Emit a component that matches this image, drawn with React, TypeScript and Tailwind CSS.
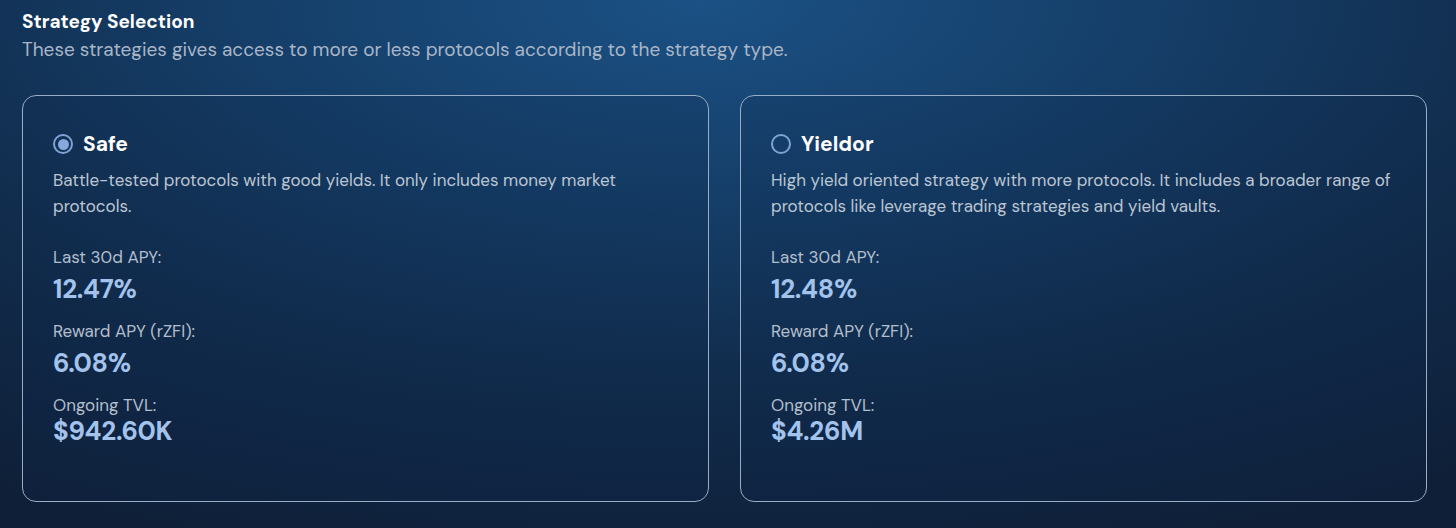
import React, { useState } from 'react';

type Strategy = {
  id: string;
  name: string;
  description: string;
  apy: string;
  reward: string;
  tvl: string;
};

const STRATEGIES: Strategy[] = [
  {
    id: 'safe',
    name: 'Safe',
    description:
      'Battle-tested protocols with good yields. It only includes money market protocols.',
    apy: '12.47%',
    reward: '6.08%',
    tvl: '$942.60K',
  },
  {
    id: 'yieldor',
    name: 'Yieldor',
    description:
      'High yield oriented strategy with more protocols. It includes a broader range of protocols like leverage trading strategies and yield vaults.',
    apy: '12.48%',
    reward: '6.08%',
    tvl: '$4.26M',
  },
];

const Radio: React.FC<{ checked: boolean }> = ({ checked }) => (
  <span className="flex h-[20px] w-[20px] items-center justify-center rounded-full border-2 border-[#7fa3d6]">
    {checked && <span className="h-[11px] w-[11px] rounded-full bg-[#86a9dc]" />}
  </span>
);

const Stat: React.FC<{ label: string; value: string; tight?: boolean }> = ({ label, value, tight }) => (
  <div className="flex flex-col">
    <span className="text-[17px] leading-[22px] text-[#b3bfcd]">{label}</span>
    <span
      className={`text-[26px] leading-[32px] font-bold tracking-[-0.3px] text-[#a3c2ec] ${tight ? '-mt-[1px]' : 'mt-[5px]'}`}
    >
      {value}
    </span>
  </div>
);

const StrategyCard: React.FC<{ strategy: Strategy; selected: boolean; onSelect: () => void }> = ({
  strategy,
  selected,
  onSelect,
}) => (
  <button
    type="button"
    onClick={onSelect}
    className="flex h-[407px] flex-1 flex-col rounded-[14px] border border-[#98adc6] bg-[#0f2a4a]/20 px-[30px] pt-[35px] text-left"
  >
    <div className="flex items-center gap-[10px]">
      <Radio checked={selected} />
      <span className="text-[21px] leading-[26px] font-bold text-white">{strategy.name}</span>
    </div>
    <p className="mt-[10px] text-[17px] leading-[26px] text-[#bcc6d3]">{strategy.description}</p>
    <div className="mt-[27px] flex flex-col gap-[15px]">
      <Stat label="Last 30d APY:" value={strategy.apy} />
      <Stat label="Reward APY (rZFI):" value={strategy.reward} />
      <Stat label="Ongoing TVL:" value={strategy.tvl} tight />
    </div>
  </button>
);

const App: React.FC = () => {
  const [selected, setSelected] = useState('safe');

  return (
    <div
      className="h-[528px] w-full overflow-hidden bg-[radial-gradient(ellipse_90%_110%_at_48%_0%,#1b5185_0%,#153e68_35%,#112c4c_65%,#0f1f38_100%)] px-[22px] pt-[10px]"
      style={{ fontFamily: '"DM Sans", Lato, "Open Sans", sans-serif' }}
    >
      <h2 className="text-[19px] leading-[24px] font-bold text-white">Strategy Selection</h2>
      <p className="mt-[3px] text-[19px] leading-[26px] text-[#a9b6c7]">
        These strategies gives access to more or less protocols according to the strategy type.
      </p>
      <div className="mt-[32px] flex gap-[31px] pr-[7px]">
        {STRATEGIES.map((s) => (
          <StrategyCard key={s.id} strategy={s} selected={selected === s.id} onSelect={() => setSelected(s.id)} />
        ))}
      </div>
    </div>
  );
};

export default App;
